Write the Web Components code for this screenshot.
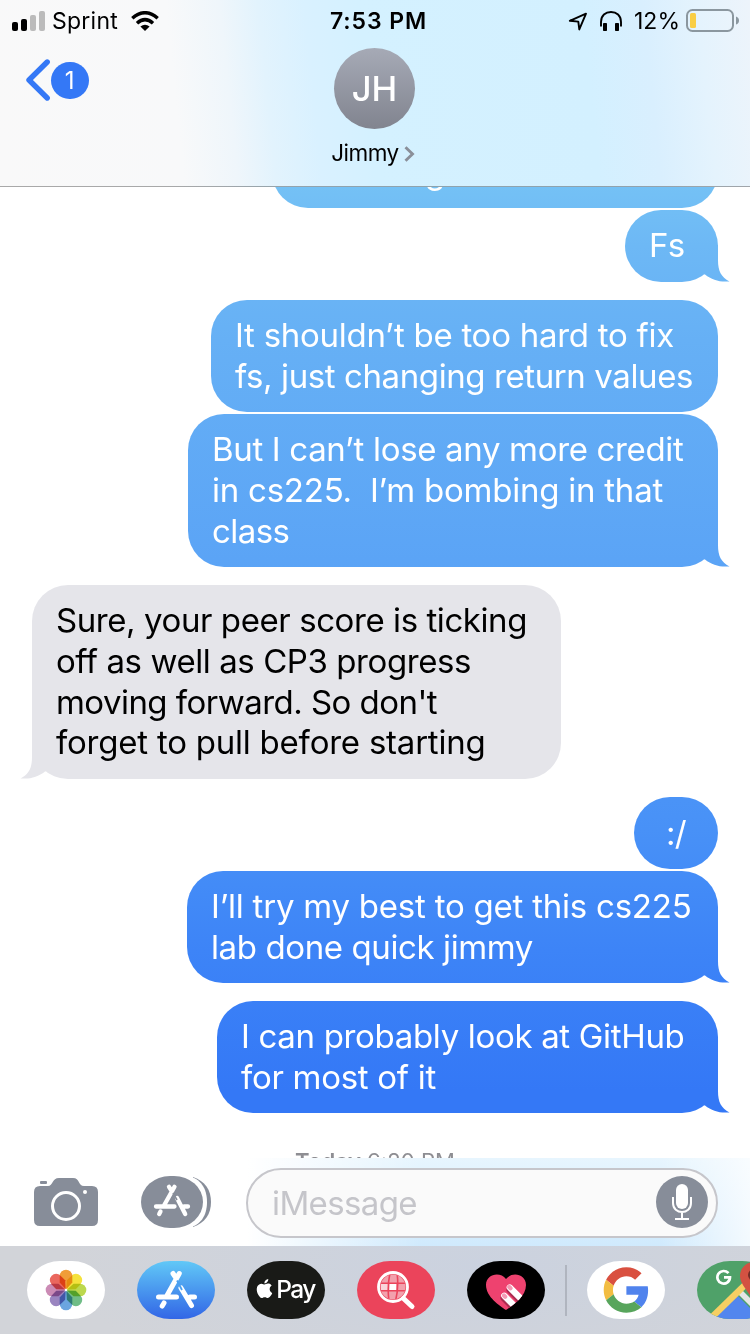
<!DOCTYPE html>
<html lang="en">
<head>
<meta charset="utf-8">
<title>Messages</title>
<style>
html,body{margin:0;padding:0}
body{width:750px;height:1334px;overflow:hidden;background:#fff;font-family:Inter,"Liberation Sans",sans-serif}
</style>
</head>
<body>
<messages-app></messages-app>
<script>
function define(name, html, setup) {
  const tpl = document.createElement('template');
  tpl.innerHTML = html;
  customElements.define(name, class extends HTMLElement {
    constructor() {
      super();
      this.attachShadow({mode: 'open'}).append(tpl.content.cloneNode(true));
    }
    connectedCallback() { if (setup) setup(this, this.shadowRoot); }
  });
}

/* One line of text, tracked so that it fills the given width. */
define('text-line', `<style>
:host{display:block}
span{display:block;width:max-content;white-space:pre}
</style><span><slot></slot></span>`, (el, root) => {
  const span = root.querySelector('span');
  const target = parseFloat(el.getAttribute('width'));
  el.style.width = target + 'px';
  const natural = span.getBoundingClientRect().width;
  const n = el.textContent.length;
  span.style.letterSpacing = ((target - natural) / n).toFixed(3) + 'px';
});

define('status-bar', `
<style>
:host{display:grid;grid-template-columns:1fr 96px 1fr;height:40px;align-items:center;font-size:23px;line-height:40px;color:#000}
text-line{padding-top:1px}
.l{display:flex;align-items:center;padding-left:12px}
.r{display:flex;align-items:center;justify-content:flex-end;padding-right:11px}
.c{font-weight:600;padding-left:3px}
svg{display:block;flex:none}
.sig{margin-right:6px}.wifi{margin-left:13px}
.loc{margin-right:12px}.head{margin-right:12px}.bat{margin-left:6px}
</style>
<div class="l">
<svg class="sig" width="34" height="20"><rect x="0" y="11" width="6" height="9" rx="2"/><rect x="9" y="8" width="6" height="12" rx="2"/><rect x="18" y="4" width="6" height="16" rx="2" fill="#bbb"/><rect x="27" y="0" width="6" height="20" rx="2" fill="#bbb"/></svg>
<text-line width="66">Sprint</text-line>
<svg class="wifi" width="28" height="20" fill="none" stroke="#000" stroke-width="3.5"><path d="M1.3 7.3Q14-3.8 26.7 7.3"/><path d="M6 12.2Q14 5 22 12.2"/><path d="M9.4 15.6Q14 12 18.6 15.6L14 20Z" fill="#000" stroke="none"/></svg>
</div>
<div class="c"><text-line width="97">7:53 PM</text-line></div>
<div class="r">
<svg class="loc" width="20" height="20" fill="none" stroke="#000" stroke-width="1.9" stroke-linejoin="round"><path d="M1.8 9.8L18 2.7L11.3 18.4L10.3 10.6Z"/></svg>
<svg class="head" width="22" height="20" fill="none" stroke="#000" stroke-width="1.9"><path d="M1 15.5V11C1 4.5 5.5 1 11 1S21 4.5 21 11V15.5"/><rect x="3" y="12" width="4" height="8" rx=".8" fill="#000" stroke="none"/><rect x="15" y="12" width="4" height="8" rx=".8" fill="#000" stroke="none"/></svg>
<text-line width="46">12%</text-line>
<svg class="bat" width="53" height="23"><rect x="1" y="1" width="46" height="21" rx="5.5" fill="none" stroke="#8b979f" stroke-width="2"/><rect x="4" y="4" width="6" height="15" rx="1.5" fill="#f9ce45"/><path d="M50 7.5Q53 8.5 53 11.5T50 15.5Z" fill="#8b979f"/></svg>
</div>`);

define('contact-avatar', `
<style>
:host{display:flex;width:81px;height:81px;border-radius:50%;align-items:center;justify-content:center;background:linear-gradient(#a6aab6,#81848f);color:#fff;font-weight:500;font-size:34.5px;line-height:83px}
</style><slot></slot>`);

define('chat-header', `
<style>
:host{display:block;box-sizing:border-box;height:187px;border-bottom:1px solid rgba(0,0,0,.32);
background:linear-gradient(84deg,#f9f9f9 0,#f8f9fa 24%,#eff6fb 31%,#e2f3fd 36%,#d9f1ff 42%,#d4f1ff 49%,#d3f0ff 78%,#d9effe 86%,#e4f3fd 93%,#edf4fb 100%)}
nav{display:grid;grid-template-columns:1fr 90px 1fr;height:146px}
.back{display:flex;padding:19px 0 0 24.5px;align-items:flex-start}
.back svg{display:block}
.badge{width:37.5px;height:37.5px;margin:2.5px 0 0 .5px;border-radius:50%;background:#3478f6;color:#fff;font-size:24px;line-height:38.5px;text-align:center}
.who{display:flex;flex-direction:column;align-items:center;padding-top:8px}
contact-avatar{margin-left:-1px}
.name{display:flex;align-items:center;height:30px;margin:9px 0 0 -4px;font-size:22.5px;line-height:30px;color:#000}
.name svg{margin-left:5px;margin-top:1px}
</style>
<status-bar></status-bar>
<nav>
<div class="back"><svg width="26" height="44" fill="none" stroke="#3478f6" stroke-width="5.4" stroke-linecap="round" stroke-linejoin="round"><path d="M22.2 3L4 21L22.2 39"/></svg><div class="badge">1</div></div>
<div class="who"><contact-avatar>JH</contact-avatar>
<div class="name"><text-line width="67.5">Jimmy</text-line><svg width="11" height="16" fill="none" stroke="#8a8f99" stroke-width="2.9"><path d="M1.5 1.3L8.5 8L1.5 14.7"/></svg></div></div>
</nav>`);

define('chat-bubble', `
<style>
:host{display:flex;position:relative;box-sizing:border-box;flex:none;flex-direction:column;justify-content:center;align-self:flex-end;margin-right:32px;padding-left:24px;border-radius:36px;color:#fff;font-size:33px;line-height:40.7px;
--sky:linear-gradient(#74c1f5 187px,#6db8f5 246px,#66b0f5 340px,#5ba4f6 560px,#4891f7 830px,#3d84f7 950px,#3478f6 1090px);
background:var(--sky) fixed}
:host([from=them]){align-self:flex-start;margin:0 0 0 32px;padding-bottom:1px;color:#000;background:#e5e5ea}
i{display:none;position:absolute;right:-12px;bottom:0;width:48px;height:40px;background:var(--sky) fixed;clip-path:path("M0 3L36 3L36 18C36 29 39 35 47.5 39.4C38 40.4 30 38 23 32.5L14 30Z")}
:host([tail]) i{display:block}
:host([from=them]) i{right:auto;left:-12px;transform:scaleX(-1);background:#e5e5ea}
::slotted(*){position:relative}
</style><i></i><slot></slot>`, el => {
  el.style.width = el.getAttribute('w') + 'px';
  el.style.height = el.getAttribute('h') + 'px';
  if (el.hasAttribute('gap')) el.style.marginTop = el.getAttribute('gap') + 'px';
});

define('chat-thread', `
<style>
:host{display:flex;flex-direction:column;height:971px;overflow:hidden;background:#fff}
.time{align-self:center;margin-top:33px;font-size:22px;line-height:30px;color:#8e8e93;display:flex;gap:6px}
.time text-line:first-child{font-weight:600}
</style>
<chat-bubble w="446" h="72" gap="-51" style="padding-left:153px"><text-line width="20">g</text-line></chat-bubble>
<chat-bubble w="93" h="72" gap="2" tail style="padding-bottom:2px"><text-line width="35.5">Fs</text-line></chat-bubble>
<chat-bubble w="507" h="112" gap="18"><text-line width="439">It shouldn’t be too hard to fix</text-line><text-line width="458">fs, just changing return values</text-line></chat-bubble>
<chat-bubble w="530" h="153" gap="2" tail><text-line width="471.5">But I can’t lose any more credit</text-line><text-line width="451">in cs225.  I’m bombing in that</text-line><text-line width="77.5">class</text-line></chat-bubble>
<chat-bubble from="them" w="529" h="194" tail style="margin-top:18px"><text-line width="471">Sure, your peer score is ticking</text-line><text-line width="415">off as well as CP3 progress</text-line><text-line width="381">moving forward. So don't</text-line><text-line width="429.5">forget to pull before starting</text-line></chat-bubble>
<chat-bubble w="84" h="72" gap="18" style="padding-left:32px"><text-line width="20">:/</text-line></chat-bubble>
<chat-bubble w="531" h="112" gap="2" tail><text-line width="480.5">I’ll try my best to get this cs225</text-line><text-line width="322">lab done quick jimmy</text-line></chat-bubble>
<chat-bubble w="501" h="112" gap="18" tail><text-line width="443.5">I can probably look at GitHub</text-line><text-line width="195">for most of it</text-line></chat-bubble>
<div class="time"><text-line width="66">Today</text-line><text-line width="88">6:20 PM</text-line></div>`);

define('compose-bar', `
<style>
:host{display:flex;box-sizing:border-box;height:88px;padding:10px 32px 0 34px;align-items:flex-start;background:linear-gradient(90deg,#fff 33%,rgba(255,255,255,0) 56%,rgba(255,255,255,0) 88%,rgba(255,255,255,.75)),linear-gradient(#e7f5fe,#d0eafd)}
svg{display:block;flex:none}
.cam{margin-top:10px}.apps{margin:8px 0 0 43px}
.field{display:flex;box-sizing:border-box;width:472px;height:70px;margin-left:35px;border:2px solid #c6c6cb;border-radius:35px;background:#fafafa;justify-content:space-between;padding:6px 8px 0 24px;font-size:33px;line-height:54px;color:#c5c5ca}
</style>
<svg class="cam" width="64" height="48"><path d="M6 8H14C19 8 18 0 25 0H39C46 0 44 8 50 8H58Q64 8 64 14V42Q64 48 58 48H6Q0 48 0 42V14Q0 8 6 8Z" fill="#878d99"/><rect x="6" y="3" width="7" height="3" rx="1" fill="#878d99"/><circle cx="32" cy="28" r="13.5" fill="none" stroke="#fff" stroke-width="3"/><circle cx="51" cy="14" r="2" fill="#fff"/></svg>
<svg class="apps" width="70" height="52"><path d="M52 1C64 5 70 14 70 26S64 47 52 51Z" fill="#878d99"/><path d="M46 0C60 2 66 13 66 26S60 50 46 52Z" fill="#fff"/><rect width="62" height="52" rx="29" ry="26" fill="#878d99"/><g stroke="#fff" stroke-width="4.3" stroke-linecap="round" fill="none"><path d="M28 10.8L31 15.5M33.5 10.8L23 29.5M15 30.5H33.5M43 30.5H47M19.5 35.5L18.2 38M36 22L44.2 38"/></g><path d="M32 17L36 24" stroke="#878d99" stroke-width="1.6"/></svg>
<div class="field"><text-line width="145">iMessage</text-line>
<svg width="52" height="52"><circle cx="26" cy="26" r="26" fill="#878d99"/><rect x="20" y="8" width="12" height="25" rx="6" fill="#fff"/><path d="M17 21V27C17 39 35 39 35 27V21M26 36V43M19 43H33" fill="none" stroke="#fff" stroke-width="2"/></svg></div>`);

/* Rounded pill that clips whatever icon is slotted in. */
define('app-pill', `
<style>
:host{display:block;flex:none;width:78px;height:58px;border-radius:33px/29px;overflow:hidden;background:var(--fill,#fff)}
::slotted(svg){display:block}
</style><slot></slot>`);

define('app-tray', `
<style>
:host{display:flex;box-sizing:border-box;height:88px;padding:15px 0 0 27px;gap:32px;overflow:hidden;background:radial-gradient(ellipse 420px 130px at 480px 20px,#cbd2df,rgba(203,210,223,0)),#d2d4d9}
hr{flex:none;width:2px;height:51px;margin:4px -12px 0 -12px;border:0;background:#b0b5bf}
text{font-family:Inter,sans-serif;font-weight:500}
.petals{isolation:isolate}
.petals path{mix-blend-mode:multiply}
</style>
<app-pill><svg width="78" height="58"><g class="petals" transform="translate(39 29)"></g><circle cx="39" cy="29" r="1.2" fill="#fff"/></svg></app-pill>
<app-pill style="--fill:linear-gradient(#61c8f7,#3266e6)"><svg width="78" height="58"><g stroke="#fff" stroke-width="5" stroke-linecap="round" fill="none"><path d="M36 12.5L39 17M42.3 12.5L30 34.5M21.5 36H39.5M53 36H57.5M27 42L25.2 45M44 27L54.5 44.5"/></g><path d="M40 19.5L45 29" stroke="#4ba0f0" stroke-width="1.8"/></svg></app-pill>
<app-pill style="--fill:#191a17"><svg width="78" height="58" fill="#fff"><path transform="translate(8 18) scale(.79)" d="M12.152 6.896c-.948 0-2.415-1.078-3.96-1.04-2.04.027-3.91 1.183-4.961 3.014-2.117 3.675-.546 9.103 1.519 12.09 1.013 1.454 2.208 3.09 3.792 3.039 1.52-.065 2.09-.987 3.935-.987 1.831 0 2.35.987 3.96.948 1.637-.026 2.676-1.48 3.676-2.948 1.156-1.688 1.636-3.325 1.662-3.415-.039-.013-3.182-1.221-3.22-4.857-.026-3.04 2.48-4.494 2.597-4.559-1.429-2.09-3.623-2.324-4.39-2.376-2-.156-3.675 1.09-4.61 1.09zM15.53 3.83c.843-1.012 1.4-2.427 1.245-3.83-1.207.052-2.662.805-3.532 1.818-.78.896-1.454 2.338-1.273 3.714 1.338.104 2.715-.688 3.559-1.701"/><text x="29.3" y="36.5" font-size="24.5" textLength="40">Pay</text></svg></app-pill>
<app-pill style="--fill:#eb445b"><svg width="78" height="58"><clipPath id="g"><circle cx="36" cy="26" r="12.5"/></clipPath><g clip-path="url(#g)"><rect x="22" y="12" width="28" height="28" fill="#f2a1ad"/><path d="M24 23H33V29H24Z" fill="#f9d6db"/><rect x="33" y="23" width="6" height="6" fill="#fff"/><path d="M22 22.3H50M22 29.8H50M33 12Q30 26 32 40M40 12Q42 26 38.5 40" stroke="#eb445b" stroke-width="1.6" fill="none"/></g><path d="M46.5 37.5L55 45.5" stroke="#fff" stroke-width="5" stroke-linecap="round"/><circle cx="36" cy="26" r="14.5" fill="none" stroke="#fff" stroke-width="2.8"/></svg></app-pill>
<app-pill style="--fill:#000"><svg width="78" height="58"><defs><path id="h" d="M39 49C33 45 19 36 19 24C19 13 33 10 39 18C45 10 59 13 59 24C59 36 45 45 39 49Z"/><clipPath id="hc"><use href="#h"/></clipPath></defs><use href="#h" fill="#ee426f"/><g clip-path="url(#hc)" stroke-linecap="round"><path d="M37 37L52 52M43 29L62 48" stroke="#ac2b50" stroke-width="7"/><path d="M37.3 34.8L53 50.5M42.8 26.5L63 46.7" stroke="#fff" stroke-width="6.3"/><path d="M37 34.5L38.2 35.7M42.3 26L43.5 27.2" stroke="#f49ab4" stroke-width="4.2"/></g></svg></app-pill>
<hr>
<app-pill><svg width="78" height="58"><g transform="translate(16.7 6.3) scale(.945)"><path fill="#d95040" d="M24 9.5c3.54 0 6.71 1.22 9.21 3.6l6.85-6.85C35.9 2.38 30.47 0 24 0 14.62 0 6.51 5.38 2.56 13.22l7.98 6.19C12.43 13.72 17.74 9.5 24 9.5z"/><path fill="#5083ed" d="M46.98 24.55c0-1.57-.15-3.09-.38-4.55H24v9.02h12.94c-.58 2.96-2.26 5.48-4.78 7.18l7.73 6c4.51-4.18 7.09-10.36 7.09-17.65z"/><path fill="#f2bd42" d="M10.53 28.59c-.48-1.45-.76-2.99-.76-4.59s.27-3.14.76-4.59l-7.98-6.19C.92 16.46 0 20.12 0 24c0 3.88.92 7.54 2.56 10.78l7.97-6.19z"/><path fill="#58a55c" d="M24 48c6.48 0 11.93-2.13 15.89-5.81l-7.73-6c-2.15 1.45-4.92 2.3-8.16 2.3-6.26 0-11.57-4.22-13.47-9.91l-7.98 6.19C6.51 42.62 14.62 48 24 48z"/></g></svg></app-pill>
<app-pill style="--fill:#4fa169"><svg width="78" height="58"><path d="M17 58L40 34L64 58Z" fill="#5286ee"/><path d="M39 31L43 27L72 56L66 58Z" fill="#e6e6e6"/><path d="M14 57L54 18" stroke="#f6cf63" stroke-width="6.5"/><path d="M31.5 12.2A6.3 6.3 0 1 0 33 16.3H27" fill="none" stroke="#fff" stroke-width="2.7"/><path d="M57 45C55 32 43 25 43 15A14 14 0 0 1 71 15C71 25 59 32 57 45Z" fill="#d35242"/><circle cx="57" cy="14" r="6" fill="#722d27"/></svg></app-pill>`, (el, root) => {
  // The Photos flower is one petal repeated around the centre.
  const group = root.querySelector('.petals');
  ['#f09d38', '#f5e23c', '#bcd84e', '#70bd87', '#6ba5df', '#9a85c0', '#cb8bb5', '#ea675e'].forEach((c, i) => {
    const p = document.createElementNS('http://www.w3.org/2000/svg', 'path');
    p.setAttribute('d', 'M0-.6L-6.3-7.5V-14A6.3 6.3 0 0 1 6.3-14V-7.5Z');
    p.setAttribute('fill', c);
    p.setAttribute('transform', 'rotate(' + i * 45 + ')');
    group.append(p);
  });
});

define('messages-app', `
<style>:host{display:flex;flex-direction:column;width:750px;height:1334px;overflow:hidden}
chat-header,chat-thread,compose-bar,app-tray{flex:none}</style>
<chat-header></chat-header><chat-thread></chat-thread><compose-bar></compose-bar><app-tray></app-tray>`);
</script>
</body>
</html>
